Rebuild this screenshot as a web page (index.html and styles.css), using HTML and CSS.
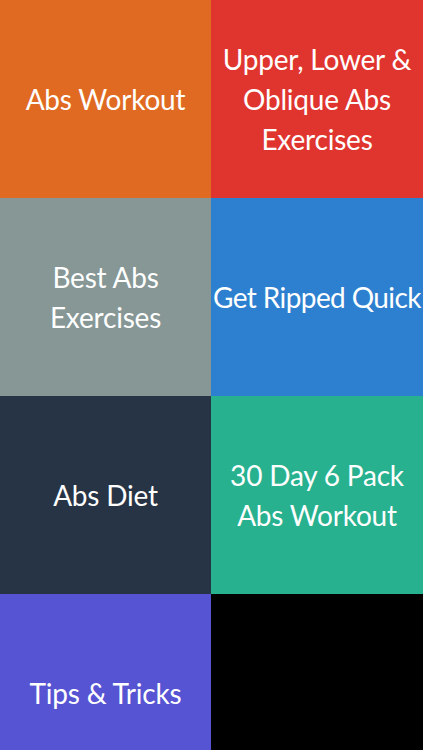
FILE: index.html
```html
<!DOCTYPE html>
<html>
<head>
<meta charset="utf-8">
<link rel="stylesheet" href="styles.css">
</head>
<body>
<div class="grid">
  <div class="tile orange">Abs Workout</div>
  <div class="tile red">Upper, Lower &amp; Oblique Abs Exercises</div>
  <div class="tile gray">Best Abs<br>Exercises</div>
  <div class="tile blue"><span class="one-line">Get Ripped Quick</span></div>
  <div class="tile navy">Abs Diet</div>
  <div class="tile green">30 Day 6 Pack<br>Abs Workout</div>
  <div class="tile purple">Tips &amp; Tricks</div>
  <div class="tile black"></div>
</div>
</body>
</html>
```
FILE: styles.css
```css
html, body {
  margin: 0;
  padding: 0;
  background: #000;
}
.grid {
  display: grid;
  grid-template-columns: 211px 212px;
  grid-template-rows: 198px 198px 198px 198px;
  width: 423px;
  height: 750px;
  overflow: hidden;
}
.tile {
  display: flex;
  align-items: center;
  justify-content: center;
  text-align: center;
  color: #fff;
  font-family: "Lato", sans-serif;
  font-size: 28px;
  letter-spacing: -0.2px;
  line-height: 40px;
  padding: 0 6px;
}
.one-line {
  white-space: nowrap;
  letter-spacing: -0.6px;
}
.blue { padding: 0; }
.orange { background: #e06a22; }
.red { background: #e0352f; }
.gray { background: #869796; }
.blue { background: #2d7fcf; }
.navy { background: #263445; }
.green { background: #27b18f; }
.purple { background: #5654d3; }
.black { background: #000; }
```
